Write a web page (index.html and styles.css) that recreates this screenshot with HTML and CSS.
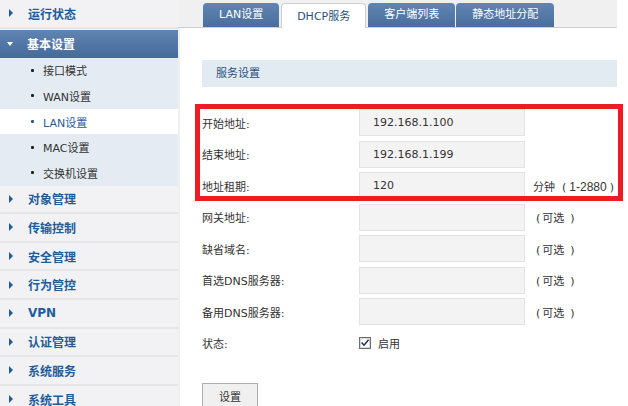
FILE: index.html
```html
<!DOCTYPE html>
<html lang="zh-CN">
<head>
<meta charset="utf-8">
<title>DHCP服务</title>
<link rel="stylesheet" href="styles.css">
</head>
<body>
<div class="page">
  <nav class="sidebar">
    <div class="menu-item"><span class="arrow"></span>运行状态</div>
    <div class="menu-head"><span class="arrow-down"></span>基本设置</div>
    <ul class="submenu">
      <li>接口模式</li>
      <li>WAN设置</li>
      <li class="selected">LAN设置</li>
      <li>MAC设置</li>
      <li>交换机设置</li>
    </ul>
    <div class="menu-item"><span class="arrow"></span>对象管理</div>
    <div class="menu-item"><span class="arrow"></span>传输控制</div>
    <div class="menu-item"><span class="arrow"></span>安全管理</div>
    <div class="menu-item"><span class="arrow"></span>行为管控</div>
    <div class="menu-item"><span class="arrow"></span>VPN</div>
    <div class="menu-item"><span class="arrow"></span>认证管理</div>
    <div class="menu-item"><span class="arrow"></span>系统服务</div>
    <div class="menu-item"><span class="arrow"></span>系统工具</div>
  </nav>
  <main class="main">
    <div class="tabbar">
      <div class="tab">LAN设置</div>
      <div class="tab active">DHCP服务</div>
      <div class="tab">客户端列表</div>
      <div class="tab">静态地址分配</div>
    </div>
    <div class="panel">
      <div class="section-title">服务设置</div>
      <div class="form">
        <div class="label">开始地址:</div><div class="input">192.168.1.100</div><div class="note"></div>
        <div class="label">结束地址:</div><div class="input">192.168.1.199</div><div class="note"></div>
        <div class="label">地址租期:</div><div class="input">120</div><div class="note">分钟<span class="po wide">(</span><span class="range">1-2880</span><span class="pc tight">)</span></div>
        <div class="label">网关地址:</div><div class="input"></div><div class="note"><span class="po">(</span>可选<span class="pc">)</span></div>
        <div class="label">缺省域名:</div><div class="input"></div><div class="note"><span class="po">(</span>可选<span class="pc">)</span></div>
        <div class="label">首选DNS服务器:</div><div class="input"></div><div class="note"><span class="po">(</span>可选<span class="pc">)</span></div>
        <div class="label">备用DNS服务器:</div><div class="input"></div><div class="note"><span class="po">(</span>可选<span class="pc">)</span></div>
        <div class="label">状态:</div>
        <div class="check">
          <svg class="checkbox" width="12" height="12" viewBox="0 0 12 12"><rect x="0.5" y="0.5" width="11" height="11" fill="#fff" stroke="#6d6d6d"/><rect x="1.5" y="1.5" width="9" height="9" fill="none" stroke="#d8d8d8"/><path d="M2.6 5.6 L5 8.2 L9.6 2.8" fill="none" stroke="#1f2f4a" stroke-width="1.5"/></svg>
          <span>启用</span>
        </div>
        <div class="note"></div>
      </div>
      <button class="btn" type="button">设置</button>
    </div>
  </main>
</div>
<div class="highlight"></div>
</body>
</html>
```
FILE: styles.css
```css
* { box-sizing: border-box; }
html, body { margin: 0; padding: 0; }
body {
  width: 628px;
  height: 406px;
  overflow: hidden;
  background: #fff;
  font-family: "DejaVu Sans", "Noto Sans CJK SC", sans-serif;
  font-size: 11px;
  color: #333;
  position: relative;
}
.page { display: flex; align-items: flex-start; }

/* sidebar */
.sidebar {
  width: 180px;
  flex: none;
  background: #f2f2f4;
  border-right: 2px solid #f0f0f0;
  height: 406px;
  overflow: hidden;
}
.menu-item {
  height: 28.6px;
  border-bottom: 2px solid #e6e6e8;
  display: flex;
  align-items: center;
  padding-left: 9px;
  font-size: 12px;
  font-weight: bold;
  color: #1f5c9a;
}
.arrow {
  width: 0; height: 0;
  border-top: 4px solid transparent;
  border-bottom: 4px solid transparent;
  border-left: 4px solid #1f5c9a;
  margin-right: 15px;
}
.menu-head {
  height: 28px;
  margin-top: 1px;
  display: flex;
  align-items: center;
  padding-left: 7px;
  font-size: 12px;
  font-weight: bold;
  color: #fff;
  background: linear-gradient(#5f85b3, #46699a);
}
.arrow-down {
  width: 0; height: 0;
  border-left: 3.5px solid transparent;
  border-right: 3.5px solid transparent;
  border-top: 4px solid #fff;
  margin-right: 14px;
}
.submenu {
  list-style: none;
  margin: 0;
  padding: 0;
  background: #e4ebf2;
}
.submenu li {
  height: 25.6px;
  display: flex;
  align-items: center;
  padding-left: 31px;
  color: #333;
}
.submenu li::before {
  content: "";
  width: 3px; height: 3px;
  background: #222;
  border-radius: 1px;
  margin-right: 9px;
}
.submenu li.selected { background: #fff; color: #2a5a98; }
.submenu li.selected::before { background: #2a5a98; }

/* main */
.main { width: 437px; flex: none; }
.tabbar {
  height: 28px;
  background: #f0f0f0;
  border-bottom: 1px solid #cfcfcf;
  display: flex;
  align-items: flex-end;
  gap: 1px;
  margin-left: -2px;
  padding-left: 25px;
}
.tab {
  height: 24px;
  padding: 0 16px;
  line-height: 24px;
  color: #fff;
  background: linear-gradient(#5f85b3, #4a6d9c);
  border-radius: 4px 4px 0 0;
}
.tab.active {
  height: 25px;
  background: #fff;
  color: #2b4f7a;
  border: 1px solid #cfcfcf;
  border-bottom: none;
  line-height: 26px;
  padding: 0 15px;
  margin: 0 1px -1px;
}
.panel { padding: 32px 0 0 22px; }
.section-title {
  height: 27px;
  line-height: 27px;
  background: #e3ebf2;
  padding-left: 14px;
  color: #2b4f7a;
}
.form {
  margin-top: 22px;
  display: grid;
  grid-template-columns: 149px 166px auto;
  grid-auto-rows: 27px;
  row-gap: 4.5px;
  column-gap: 8px;
  align-items: center;
}
.label { color: #333; }
.input {
  height: 27px;
  background: #f3f3f3;
  border: 1px solid #e3e3e3;
  padding-left: 13px;
  line-height: 25px;
  color: #333;
}
.note {
  color: #333;
  white-space: nowrap;
}
.po { display: inline-block; padding: 0 2px 0 3px; }
.po.wide { padding: 0 3px 0 7px; }
.pc { display: inline-block; padding: 0 0 0 6px; }
.pc.tight { padding-left: 3px; }
.range { font-family: "Liberation Sans", "DejaVu Sans", sans-serif; font-size: 12px; }
.check { display: flex; align-items: center; gap: 7px; }
.checkbox { display: block; }
.btn {
  margin-top: 26.5px;
  width: 56px;
  height: 26px;
  background: #f0f0f0;
  border: 1px solid #adadad;
  font-family: "DejaVu Sans", "Noto Sans CJK SC", sans-serif;
  font-size: 11px;
  color: #333;
  padding: 0;
}

/* annotation overlay */
.highlight {
  position: absolute;
  left: 195px;
  top: 104px;
  width: 428px;
  height: 97px;
  border: 5px solid #ed1c24;
}
```
